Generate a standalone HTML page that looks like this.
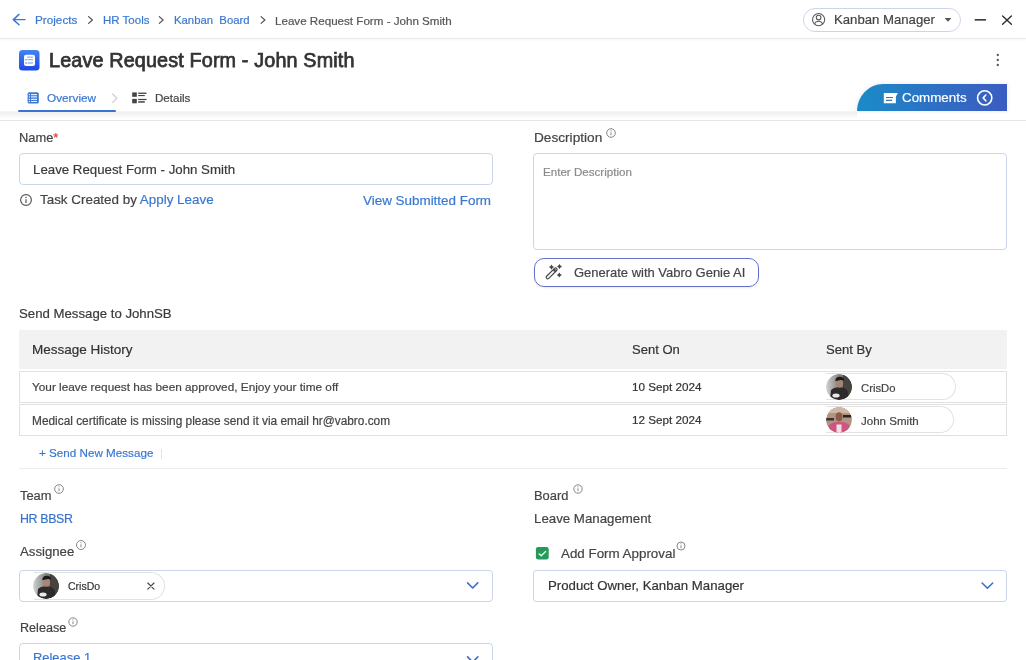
<!DOCTYPE html><html><head><meta charset="utf-8"><style>*{margin:0;padding:0;box-sizing:content-box}
html,body{width:1026px;height:660px;overflow:hidden;background:#fff;position:relative;font-family:"Liberation Sans", sans-serif}
.t{position:absolute;line-height:1;white-space:nowrap;font-family:"Liberation Sans", sans-serif;will-change:transform;-webkit-text-stroke:0.2px currentColor}
.av1,.av2{width:26px;height:26px;border-radius:50%;overflow:hidden}
.av1 svg,.av2 svg{display:block}
</style></head><body>
<div style="position:absolute;left:0;top:0;width:1026px;height:38px;background:#fff;border-bottom:1px solid #e9e9e9;box-shadow:0 1px 2px rgba(0,0,0,0.04)"></div>
<svg style="position:absolute;left:0;top:0" width="300" height="38"><g fill="none" stroke="#3a78d2" stroke-width="1.45" stroke-linecap="round" stroke-linejoin="round"><path d="M13.5 19.6H25M19 14.4L13.3 19.6L19 24.8"/></g><g fill="none" stroke="#555" stroke-width="1.25" stroke-linecap="round" stroke-linejoin="round"><path d="M88.6 16.6L92.4 20L88.6 23.4"/><path d="M159.3 16.6L163.1 20L159.3 23.4"/><path d="M261.1 16.6L264.9 20L261.1 23.4"/></g></svg>
<div class="t" style="left:34.90px;top:14.26px;font-size:11.74px;color:#3a78d2;font-weight:400;">Projects</div>
<div class="t" style="left:102.80px;top:15.36px;font-size:11.5px;color:#3a78d2;font-weight:400;">HR Tools</div>
<div class="t" style="left:173.60px;top:14.61px;font-size:11.33px;color:#3a78d2;font-weight:400;white-space:pre">Kanban&nbsp; Board</div>
<div class="t" style="left:274.90px;top:14.56px;font-size:11.62px;color:#555;font-weight:400;">Leave Request Form - John Smith</div>
<div style="position:absolute;left:803px;top:8px;width:156px;height:22px;border:1px solid #cdd5ec;border-radius:12px;background:#fff"></div>
<svg style="position:absolute;left:800px;top:0" width="226" height="38"><g fill="none" stroke="#5a5a5a" stroke-width="1.1"><circle cx="18.6" cy="19.6" r="6.1"/><circle cx="18.6" cy="17.6" r="2.3"/><path d="M14.4 23.9C15.4 22 17 21.2 18.6 21.2S21.8 22 22.8 23.9"/></g><path d="M144.6 18L151.4 18L148 21.8Z" fill="#555"/><rect x="174.7" y="19.1" width="11.3" height="1.5" fill="#2a2a2a"/><g stroke="#2a2a2a" stroke-width="1.35" stroke-linecap="round"><path d="M202.6 15.9L211.4 24.2M211.4 15.9L202.6 24.2"/></g></svg>
<div class="t" style="left:833.70px;top:13.06px;font-size:13.16px;color:#444;font-weight:400;">Kanban Manager</div>
<svg style="position:absolute;left:19px;top:50px" width="21" height="21"><defs><linearGradient id="g1" x1="0" y1="0" x2="0" y2="1"><stop offset="0" stop-color="#4285f4"/><stop offset="1" stop-color="#1f47e6"/></linearGradient></defs><rect x="0" y="0" width="20.5" height="20.5" rx="3.5" fill="url(#g1)"/><rect x="5" y="4.8" width="11" height="11.3" rx="2" fill="#fff"/><g stroke="#9fb6f0" stroke-width="1.3"><path d="M8 7.2H14M8.5 9.7H14M8.5 13H14"/></g><g fill="#5a7de8"><circle cx="7" cy="9.7" r="0.8"/><circle cx="7" cy="13" r="0.8"/></g></svg>
<div class="t" style="left:49.10px;top:50.84px;font-size:19.8px;color:#333;font-weight:400;-webkit-text-stroke:0.75px #333;letter-spacing:0.14px;">Leave Request Form - John Smith</div>
<svg style="position:absolute;left:990px;top:50px" width="16" height="20"><g fill="#555"><circle cx="7.8" cy="5" r="1.15"/><circle cx="7.8" cy="10" r="1.15"/><circle cx="7.8" cy="15" r="1.15"/></g></svg>
<div style="position:absolute;left:0;top:111px;width:857px;height:8px;background:linear-gradient(#f6f6f6,#f0f0f0 25%,#fafafa 70%,#fff)"></div>
<div style="position:absolute;left:0;top:119.5px;width:1026px;height:1px;background:#e6e6e6"></div>
<div style="position:absolute;left:18px;top:110px;width:97.5px;height:2.2px;background:#3a74d0;border-radius:1px"></div>
<svg style="position:absolute;left:20px;top:85px" width="140" height="25"><rect x="7.6" y="7.2" width="11.2" height="11.4" rx="1.5" fill="#3d78d6"/><g stroke="#d8f0ff" stroke-width="1.1"><path d="M11 9.6H17M11 11.9H17M11 14.4H17M11 16.5H17"/></g><g fill="#d8f0ff"><rect x="8.8" y="9" width="1.2" height="1.2"/><rect x="8.8" y="11.3" width="1.2" height="1.2"/><rect x="8.8" y="13.8" width="1.2" height="1.2"/><rect x="8.8" y="15.9" width="1.2" height="1.2"/></g><path d="M92.3 8.8L96.8 13.2L92.3 17.8" fill="none" stroke="#cfcfcf" stroke-width="1.2"/><g fill="#444"><rect x="112.2" y="7.4" width="4.6" height="4.4"/><rect x="112.2" y="13.9" width="4.6" height="4.4"/><rect x="118.2" y="7.6" width="8.3" height="1.3"/><rect x="118.2" y="10" width="6.6" height="1.1"/><rect x="118.2" y="13.9" width="8.3" height="1.2"/><rect x="118.2" y="16.2" width="6.6" height="1.5"/></g></svg>
<div class="t" style="left:46.80px;top:91.73px;font-size:11.78px;color:#3a78d2;font-weight:400;">Overview</div>
<div class="t" style="left:154.60px;top:92.70px;font-size:11.58px;color:#444;font-weight:400;">Details</div>
<div style="position:absolute;left:857px;top:84.4px;width:150px;height:26.6px;border-top-left-radius:26px 27px;background:linear-gradient(90deg,#1a8cc7,#2f6ec4 55%,#3b5cc2);box-shadow:0 0 4px rgba(80,90,200,0.15)"></div>
<svg style="position:absolute;left:857px;top:80px" width="150" height="32"><path d="M26.8 13H40.9L38.9 16.5V23.2H26.8Z" fill="#fff"/><g stroke="#2a7dc6" stroke-width="1.2"><path d="M29 17.5H36M29 20.3H35"/></g><circle cx="127.7" cy="17.9" r="7.1" fill="none" stroke="#fff" stroke-width="1.6"/><path d="M128.8 15L126.2 17.9L128.8 20.8" fill="none" stroke="#fff" stroke-width="1.6" stroke-linecap="round" stroke-linejoin="round"/></svg>
<div class="t" style="left:901.80px;top:90.99px;font-size:13.36px;color:#fff;font-weight:400;">Comments</div>
<div class="t" style="left:19.40px;top:132.31px;font-size:12.86px;color:#444;font-weight:400;">Name<span style="color:#d9413a">*</span></div>
<div style="position:absolute;left:19px;top:153px;width:472px;height:30px;border:1px solid #cbd6ea;border-radius:4px"></div>
<div class="t" style="left:33.40px;top:162.56px;font-size:13.28px;color:#3a3a3a;font-weight:400;">Leave Request Form - John Smith</div>
<svg style="position:absolute;left:18px;top:192px" width="16" height="16"><circle cx="8" cy="8" r="5.4" fill="none" stroke="#555" stroke-width="1.15"/><rect x="7.4" y="7.2" width="1.2" height="3.8" fill="#555"/><circle cx="8" cy="5.4" r="0.75" fill="#555"/></svg>
<div class="t" style="left:40.40px;top:193.34px;font-size:13.42px;color:#444;font-weight:400;">Task Created by <span style="color:#3a78d2">Apply Leave</span></div>
<div class="t" style="left:363.40px;top:193.53px;font-size:13.43px;color:#3a78d2;font-weight:400;">View Submitted Form</div>
<div class="t" style="left:533.90px;top:131.14px;font-size:13.65px;color:#444;font-weight:400;">Description</div>
<svg style="position:absolute;left:604px;top:126px" width="14" height="14"><circle cx="7" cy="7" r="4.3" fill="none" stroke="#777" stroke-width="0.9"/><rect x="6.55" y="6.3" width="0.9" height="3" fill="#777"/><circle cx="7" cy="4.9" r="0.55" fill="#777"/></svg>
<div style="position:absolute;left:533px;top:153px;width:472px;height:95px;border:1px solid #cbd6ea;border-radius:4px"></div>
<div class="t" style="left:543.20px;top:166.28px;font-size:11.6px;color:#8a8a8a;font-weight:400;">Enter Description</div>
<div style="position:absolute;left:534px;top:258.4px;width:222.5px;height:26.2px;border:1.2px solid #6570cc;border-radius:10px;box-shadow:0 1px 2px rgba(90,100,210,0.12)"></div>
<svg style="position:absolute;left:540px;top:260px" width="30" height="24"><path d="M7.7 17.3L15.6 9.4" stroke="#444" stroke-width="4.2" stroke-linecap="round"/><path d="M7.7 17.3L15.6 9.4" stroke="#fff" stroke-width="1.8" stroke-linecap="round"/><path d="M13.6 11.4L15.6 9.4" stroke="#444" stroke-width="1.8"/><g fill="#444"><path d="M11.5 4.3999999999999995Q12.25 6.35 14.2 7.1Q12.25 7.85 11.5 9.8Q10.75 7.85 8.8 7.1Q10.75 6.35 11.5 4.3999999999999995Z"/><path d="M19.5 4.0Q20.25 5.75 22.0 6.5Q20.25 7.25 19.5 9.0Q18.75 7.25 17.0 6.5Q18.75 5.75 19.5 4.0Z"/><path d="M19.3 12.4Q20.05 14.15 21.8 14.9Q20.05 15.65 19.3 17.4Q18.55 15.65 16.8 14.9Q18.55 14.15 19.3 12.4Z"/></g></svg>
<div class="t" style="left:573.70px;top:267.32px;font-size:12.97px;color:#444;font-weight:400;">Generate with Vabro Genie AI</div>
<div class="t" style="left:19.40px;top:306.52px;font-size:13.21px;color:#3a3a3a;font-weight:400;">Send Message to JohnSB</div>
<div style="position:absolute;left:19px;top:330px;width:987.5px;height:39px;background:#f2f2f2"></div>
<div class="t" style="left:32.20px;top:343.16px;font-size:13.51px;color:#333;font-weight:400;">Message History</div>
<div class="t" style="left:631.50px;top:342.87px;font-size:13.03px;color:#333;font-weight:400;">Sent On</div>
<div class="t" style="left:825.70px;top:342.80px;font-size:13.11px;color:#333;font-weight:400;">Sent By</div>
<div style="position:absolute;left:19px;top:371.3px;width:986px;height:30px;border:1px solid #e0e0e0"></div>
<div class="t" style="left:32.20px;top:381.81px;font-size:11.8px;color:#444;font-weight:400;">Your leave request has been approved, Enjoy your time off</div>
<div class="t" style="left:631.50px;top:381.39px;font-size:11.71px;color:#333;font-weight:400;">10 Sept 2024</div>
<div style="position:absolute;left:826px;top:372.90000000000003px;width:128.5px;height:25.5px;border:1px solid #e2e2e2;border-left:none;border-radius:0 14px 14px 0"></div>
<div class="t" style="left:860.60px;top:383.24px;font-size:11.29px;color:#444;font-weight:400;">CrisDo</div>
<div class="av1" style="position:absolute;left:826px;top:374.1px"><svg width="26" height="26" viewBox="0 0 26 26"><defs><linearGradient id="ga1" x1="0" x2="1" y1="0" y2="0"><stop offset="0" stop-color="#d0d2d2"/><stop offset="0.45" stop-color="#8c8a88"/><stop offset="1" stop-color="#3c3a38"/></linearGradient><clipPath id="c1"><circle cx="13" cy="13" r="12.9"/></clipPath></defs><g clip-path="url(#c1)"><rect width="26" height="26" fill="url(#ga1)"/><rect x="17" y="0" width="9" height="26" fill="#47433f"/><path d="M4 26L5 16Q8 13 11 13.5L17 13.5Q21 15 22 18L23 26Z" fill="#2e2a29"/><ellipse cx="13.8" cy="9.6" rx="3.3" ry="4" fill="#a88474"/><path d="M9.2 7.2Q9.6 2.6 13.8 2.8Q18 3 18.2 6.8Q16 5.6 13.5 6.2Q11 6.6 9.2 7.2Z" fill="#1d1a19"/><ellipse cx="10" cy="21.5" rx="3.6" ry="2.1" fill="#e9e9e9"/></g></svg></div>
<div style="position:absolute;left:19px;top:404.1px;width:986px;height:30px;border:1px solid #e0e0e0"></div>
<div class="t" style="left:32.20px;top:415.76px;font-size:11.86px;color:#444;font-weight:400;">Medical certificate is missing please send it via email hr@vabro.com</div>
<div class="t" style="left:631.50px;top:414.19px;font-size:11.71px;color:#333;font-weight:400;">12 Sept 2024</div>
<div style="position:absolute;left:826px;top:405.70000000000005px;width:126.5px;height:25.5px;border:1px solid #e2e2e2;border-left:none;border-radius:0 14px 14px 0"></div>
<div class="t" style="left:860.60px;top:416.02px;font-size:11.55px;color:#444;font-weight:400;">John Smith</div>
<div class="av2" style="position:absolute;left:826px;top:406.90000000000003px"><svg width="26" height="26" viewBox="0 0 26 26"><defs><clipPath id="d1"><circle cx="13" cy="13" r="12.9"/></clipPath></defs><g clip-path="url(#d1)"><rect width="26" height="26" fill="#b09484"/><rect x="0" y="0" width="26" height="6" fill="#cdb9a6"/><rect x="0" y="11" width="8" height="2.5" fill="#3e302a"/><rect x="17" y="8" width="9" height="2.5" fill="#2a2320"/><path d="M2 26L3 18Q7 15 10 15L16 15Q20 15 23 18L25 26Z" fill="#cd5580"/><rect x="10.5" y="17.5" width="5" height="9" fill="#f2dfe6"/><ellipse cx="13" cy="9.8" rx="3.4" ry="4.6" fill="#8a5c46"/></g></svg></div>
<div class="t" style="left:39.00px;top:447.32px;font-size:11.67px;color:#3a78d2;font-weight:400;">+ Send New Message</div>
<div style="position:absolute;left:161px;top:448.5px;width:1px;height:10.5px;background:#e0e0e0"></div>
<div style="position:absolute;left:19px;top:468px;width:987.5px;height:1px;background:#ececec"></div>
<div class="t" style="left:19.60px;top:490.10px;font-size:12.88px;color:#444;font-weight:400;">Team</div>
<svg style="position:absolute;left:51.20px;top:480.90px" width="16" height="16"><circle cx="8" cy="8" r="4.35" fill="none" stroke="#7a7a7a" stroke-width="0.9"/><rect x="7.55" y="7.3" width="0.9" height="2.9" fill="#7a7a7a"/><circle cx="8" cy="5.8" r="0.55" fill="#7a7a7a"/></svg>
<div class="t" style="left:19.60px;top:512.80px;font-size:12.4px;color:#3874cc;font-weight:400;letter-spacing:-0.35px;">HR BBSR</div>
<div class="t" style="left:19.60px;top:545.32px;font-size:13.2px;color:#444;font-weight:400;">Assignee</div>
<svg style="position:absolute;left:72.65px;top:537.35px" width="16" height="16"><circle cx="8" cy="8" r="4.50" fill="none" stroke="#7a7a7a" stroke-width="0.9"/><rect x="7.55" y="7.3" width="0.9" height="2.9" fill="#7a7a7a"/><circle cx="8" cy="5.8" r="0.55" fill="#7a7a7a"/></svg>
<div style="position:absolute;left:19px;top:570px;width:472px;height:30px;border:1px solid #cbd6ea;border-radius:4px"></div>
<div style="position:absolute;left:33.5px;top:572px;width:130px;height:25.5px;border:1px solid #e2e2e2;border-left:none;border-radius:0 14px 14px 0"></div>
<div class="av1" style="position:absolute;left:33.3px;top:573px"><svg width="26" height="26" viewBox="0 0 26 26"><defs><linearGradient id="ga2" x1="0" x2="1" y1="0" y2="0"><stop offset="0" stop-color="#d0d2d2"/><stop offset="0.45" stop-color="#8c8a88"/><stop offset="1" stop-color="#3c3a38"/></linearGradient><clipPath id="c2"><circle cx="13" cy="13" r="12.9"/></clipPath></defs><g clip-path="url(#c2)"><rect width="26" height="26" fill="url(#ga2)"/><rect x="17" y="0" width="9" height="26" fill="#47433f"/><path d="M4 26L5 16Q8 13 11 13.5L17 13.5Q21 15 22 18L23 26Z" fill="#2e2a29"/><ellipse cx="13.8" cy="9.6" rx="3.3" ry="4" fill="#a88474"/><path d="M9.2 7.2Q9.6 2.6 13.8 2.8Q18 3 18.2 6.8Q16 5.6 13.5 6.2Q11 6.6 9.2 7.2Z" fill="#1d1a19"/><ellipse cx="10" cy="21.5" rx="3.6" ry="2.1" fill="#e9e9e9"/></g></svg></div>
<div class="t" style="left:68.30px;top:580.71px;font-size:10.5px;color:#333;font-weight:400;">CrisDo</div>
<svg style="position:absolute;left:140px;top:576px" width="20" height="20"><path d="M7.8 7L14 13.1M14 7L7.8 13.1" stroke="#444" stroke-width="1.15" stroke-linecap="round"/></svg>
<svg style="position:absolute;left:460px;top:576px" width="24" height="18"><path d="M7.6 6.9L12.7 12L17.8 6.9" fill="none" stroke="#3d6fc6" stroke-width="1.6" stroke-linecap="round" stroke-linejoin="round"/></svg>
<div class="t" style="left:19.60px;top:621.52px;font-size:12.62px;color:#444;font-weight:400;">Release</div>
<svg style="position:absolute;left:64.95px;top:613.55px" width="16" height="16"><circle cx="8" cy="8" r="4.20" fill="none" stroke="#7a7a7a" stroke-width="0.9"/><rect x="7.55" y="7.3" width="0.9" height="2.9" fill="#7a7a7a"/><circle cx="8" cy="5.8" r="0.55" fill="#7a7a7a"/></svg>
<div style="position:absolute;left:19px;top:643px;width:472px;height:40px;border:1px solid #cbd6ea;border-radius:4px"></div>
<div class="t" style="left:32.90px;top:652.48px;font-size:12.9px;color:#3a78d2;font-weight:400;">Release 1</div>
<svg style="position:absolute;left:460px;top:650px" width="24" height="18"><path d="M7.6 6.9L12.7 12L17.8 6.9" fill="none" stroke="#3d6fc6" stroke-width="1.6" stroke-linecap="round" stroke-linejoin="round"/></svg>
<div class="t" style="left:533.90px;top:490.09px;font-size:12.89px;color:#444;font-weight:400;">Board</div>
<svg style="position:absolute;left:569.65px;top:481.25px" width="16" height="16"><circle cx="8" cy="8" r="4.20" fill="none" stroke="#7a7a7a" stroke-width="0.9"/><rect x="7.55" y="7.3" width="0.9" height="2.9" fill="#7a7a7a"/><circle cx="8" cy="5.8" r="0.55" fill="#7a7a7a"/></svg>
<div class="t" style="left:533.90px;top:511.76px;font-size:13.28px;color:#444;font-weight:400;">Leave Management</div>
<svg style="position:absolute;left:534px;top:545px" width="17" height="17"><rect x="1.9" y="1.9" width="12.8" height="12.7" rx="2.4" fill="#24995a"/><path d="M5.2 9L7.2 10.8L11.6 6.5" fill="none" stroke="#e6ffee" stroke-width="1.4" stroke-linecap="round" stroke-linejoin="round"/></svg>
<div class="t" style="left:560.80px;top:546.69px;font-size:13.36px;color:#444;font-weight:400;">Add Form Approval</div>
<svg style="position:absolute;left:672.75px;top:537.75px" width="16" height="16"><circle cx="8" cy="8" r="4.00" fill="none" stroke="#7a7a7a" stroke-width="0.9"/><rect x="7.55" y="7.3" width="0.9" height="2.9" fill="#7a7a7a"/><circle cx="8" cy="5.8" r="0.55" fill="#7a7a7a"/></svg>
<div style="position:absolute;left:533px;top:570px;width:472px;height:30px;border:1px solid #cbd6ea;border-radius:3px"></div>
<div class="t" style="left:548.40px;top:579.12px;font-size:13.21px;color:#333;font-weight:400;">Product Owner, Kanban Manager</div>
<svg style="position:absolute;left:975px;top:576px" width="24" height="18"><path d="M7.1 7L12.4 12.3L17.7 7" fill="none" stroke="#3d6fc6" stroke-width="1.6" stroke-linecap="round" stroke-linejoin="round"/></svg>
</body></html>
